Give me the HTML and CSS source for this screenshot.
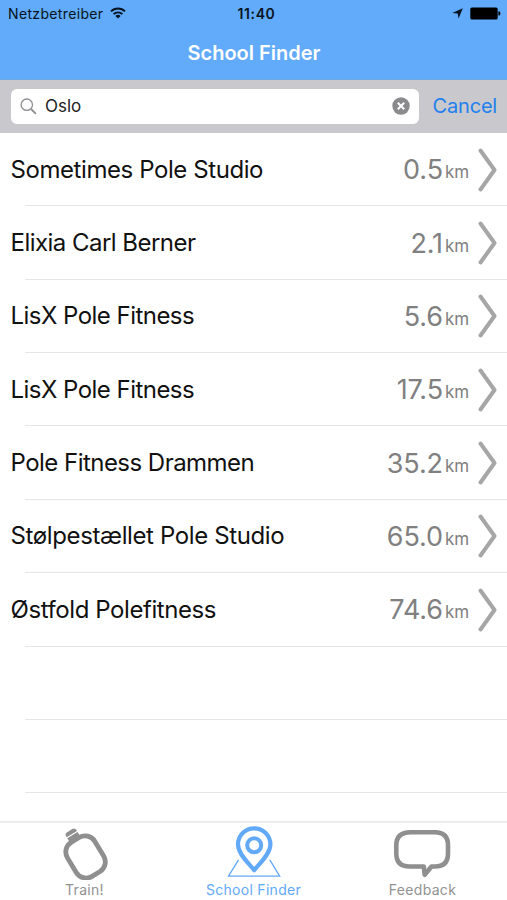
FILE: index.html
```
<!DOCTYPE html>
<html lang="en">
<head>
<meta charset="utf-8">
<title>School Finder</title>
<link rel="stylesheet" href="styles.css">
</head>
<body>
<div class="app">
  <header class="header">
    <div class="status">
      <div class="carrier"><span>Netzbetreiber</span>
        <svg class="wifi" width="16" height="12" viewBox="0 0 16 12"><g fill="none" stroke="#071321" stroke-width="1.9"><path d="M1 4.4a10 10 0 0 1 14 0"/><path d="M3.6 7.2a6.2 6.2 0 0 1 8.8 0"/></g><path fill="#071321" d="M8 11.6 5.4 9a3.7 3.7 0 0 1 5.2 0z"/></svg>
      </div>
      <span class="clock">11:40</span>
      <div class="indicators">
        <svg width="11" height="11" viewBox="0 0 11 11"><path fill="#071321" d="M10.8.2 6.600 10.600 5.700 5.600.3 5z"/></svg>
        <svg width="31" height="13" viewBox="0 0 31 13"><rect x=".3" y=".4" width="27.4" height="12" rx="1.5"/><path d="M28.4 4.2c1.500.2 2 1 2 2.200s-.5 2-2 2.200z"/></svg>
      </div>
    </div>
    <h1 class="title">School Finder</h1>
  </header>
  <div class="search">
    <div class="field">
      <svg width="17" height="17" viewBox="0 0 17 17" fill="none" stroke="#8e8e93"><circle cx="6.800" cy="6.700" r="5.700" stroke-width="1.300"/><path d="m11 11 4.900 4.900" stroke-width="1.800"/></svg>
      <span class="query">Oslo</span>
      <svg width="18" height="18" viewBox="0 0 18 18"><circle cx="9" cy="9" r="8.700" fill="#8b8b8d"/><path d="m5.800 5.800 6.400 6.400m0-6.400-6.400 6.400" stroke="#fff" stroke-width="2"/></svg>
    </div>
    <span class="cancel">Cancel</span>
  </div>
  <main class="list">
    <div class="row"><span class="name tight">Sometimes Pole Studio</span><span class="dist">0.5</span><span class="unit">km</span><svg class="chev" viewBox="0 0 20 44"><path d="m2.500 2.500 14 19.500-14 19.500"/></svg></div>
    <div class="row"><span class="name tighter">Elixia Carl Berner</span><span class="dist">2.1</span><span class="unit">km</span><svg class="chev" viewBox="0 0 20 44"><path d="m2.500 2.500 14 19.500-14 19.500"/></svg></div>
    <div class="row"><span class="name tighter">LisX Pole Fitness</span><span class="dist">5.6</span><span class="unit">km</span><svg class="chev" viewBox="0 0 20 44"><path d="m2.500 2.500 14 19.500-14 19.500"/></svg></div>
    <div class="row"><span class="name tighter">LisX Pole Fitness</span><span class="dist">17.5</span><span class="unit">km</span><svg class="chev" viewBox="0 0 20 44"><path d="m2.500 2.500 14 19.500-14 19.500"/></svg></div>
    <div class="row"><span class="name tighter">Pole Fitness Drammen</span><span class="dist">35.2</span><span class="unit">km</span><svg class="chev" viewBox="0 0 20 44"><path d="m2.500 2.500 14 19.500-14 19.500"/></svg></div>
    <div class="row"><span class="name">Stølpestællet Pole Studio</span><span class="dist">65.0</span><span class="unit">km</span><svg class="chev" viewBox="0 0 20 44"><path d="m2.500 2.500 14 19.500-14 19.500"/></svg></div>
    <div class="row"><span class="name tight">Østfold Polefitness</span><span class="dist">74.6</span><span class="unit">km</span><svg class="chev" viewBox="0 0 20 44"><path d="m2.500 2.500 14 19.500-14 19.500"/></svg></div>
    <div class="row"></div>
    <div class="row"></div>
  </main>
  <nav class="tabs">
    <div class="tab">
      <svg width="60" height="57" viewBox="0 0 60 57"><g transform="translate(30.300 33.500) rotate(-31)"><rect x="-16" y="-19.500" width="32" height="40" rx="11.500" fill="none" stroke="#8f8f8f" stroke-width="4.800"/><path fill="#8f8f8f" d="M-6-19v-6h12v6zM-6-26.200v-1q0-3 3-3h6q3 0 3 3v1z"/></g></svg>
      <span>Train!</span>
    </div>
    <div class="tab active">
      <svg width="60" height="57" viewBox="0 0 60 57" fill="none" stroke="#62a9f8"><path d="M14.500 36.800 4.500 53.200h51.200L45.800 36.800" stroke-width="1.300"/><path d="M30.200 47.200C25 40.500 14 31 14 21.500a16.200 16.200 0 0 1 32.400 0C46.400 31 35.400 40.500 30.200 47.200z" stroke-width="4.200" stroke-linejoin="round"/><circle cx="30.200" cy="22.300" r="7" stroke-width="4"/></svg>
      <span>School Finder</span>
    </div>
    <div class="tab">
      <svg width="60" height="57" viewBox="0 0 60 57" fill="none" stroke="#8f8f8f" stroke-width="4.600" stroke-linejoin="round"><path d="M17.500 9.300h24.500q13 0 13 13v8.200q0 13-13 13H38.500l-6.800 8.200-.9-8.200H16.500Q3.300 43.500 3.300 30.500v-8.200Q3.300 9.300 17.500 9.300z"/></svg>
      <span>Feedback</span>
    </div>
  </nav>
</div>
</body>
</html>
```
FILE: styles.css
```
* { box-sizing: border-box; }
body { margin: 0; font-family: Inter, "Liberation Sans", sans-serif; background: #fff; color: #000; }
svg { display: block; flex: none; }
.app { width: 507px; height: 900px; display: flex; flex-direction: column; overflow: hidden; }
.header { height: 80px; background: #62abfb; border-bottom: 1px solid #71a8e2; flex: none; }
.status { height: 27px; padding: 0 6px 0 8px; display: grid; grid-template-columns: 1fr auto 1fr; align-items: center; font-size: 14px; color: #071321; }
.carrier { display: flex; align-items: center; gap: 7px; letter-spacing: .35px; }
.wifi { margin-top: -2px; }
.clock { font-weight: 600; letter-spacing: .6px; padding-left: 4px; }
.indicators { display: flex; justify-content: flex-end; align-items: center; gap: 7px; }
.title { margin: 0; height: 50px; line-height: 52px; padding-left: 1px; text-align: center; color: #fff; font-size: 20px; font-weight: 600; }
.search { height: 53px; flex: none; background: #c8c8cd; display: flex; align-items: center; padding: 0 10px 1px 11px; justify-content: space-between; }
.field { width: 408px; height: 35px; border-radius: 6px; background: #fff; display: flex; align-items: center; padding: 0 9px; }
.query { flex: 1; margin-left: 8px; padding-bottom: 1px; font-size: 17px; color: #222; }
.cancel { font-size: 20px; letter-spacing: -.2px; padding-bottom: 1px; color: #2180ee; }
.list { flex: 1; min-height: 0; }
.row { height: 73.370px; display: flex; align-items: center; padding: 0 9px 0 10.500px; background: linear-gradient(#e6e6e8, #e6e6e8) 25px 100% / 482px 1px no-repeat; }
.name { flex: 1; font-size: 24px; line-height: 72px; letter-spacing: -.38px; color: #111; }
.tight { letter-spacing: -.42px; }
.tighter { letter-spacing: -.53px; }
.dist { font-size: 27px; line-height: 73px; letter-spacing: -.1px; color: #808080; }
.unit { font-size: 17px; line-height: 73px; padding-top: 6px; letter-spacing: -.1px; color: #808080; margin-left: 2px; }
.chev { width: 20px; height: 44px; margin-left: 9px; fill: none; stroke: #a6a6a6; stroke-width: 4; stroke-linecap: round; stroke-linejoin: round; }
.tabs { height: 79px; flex: none; border-top: 2px solid #ededed; display: grid; grid-template-columns: repeat(3, 1fr); }
.tab { display: flex; flex-direction: column; align-items: center; font-size: 14px; line-height: 20px; color: #929292; letter-spacing: .3px; }
.active { color: #62a9f8; }
```
